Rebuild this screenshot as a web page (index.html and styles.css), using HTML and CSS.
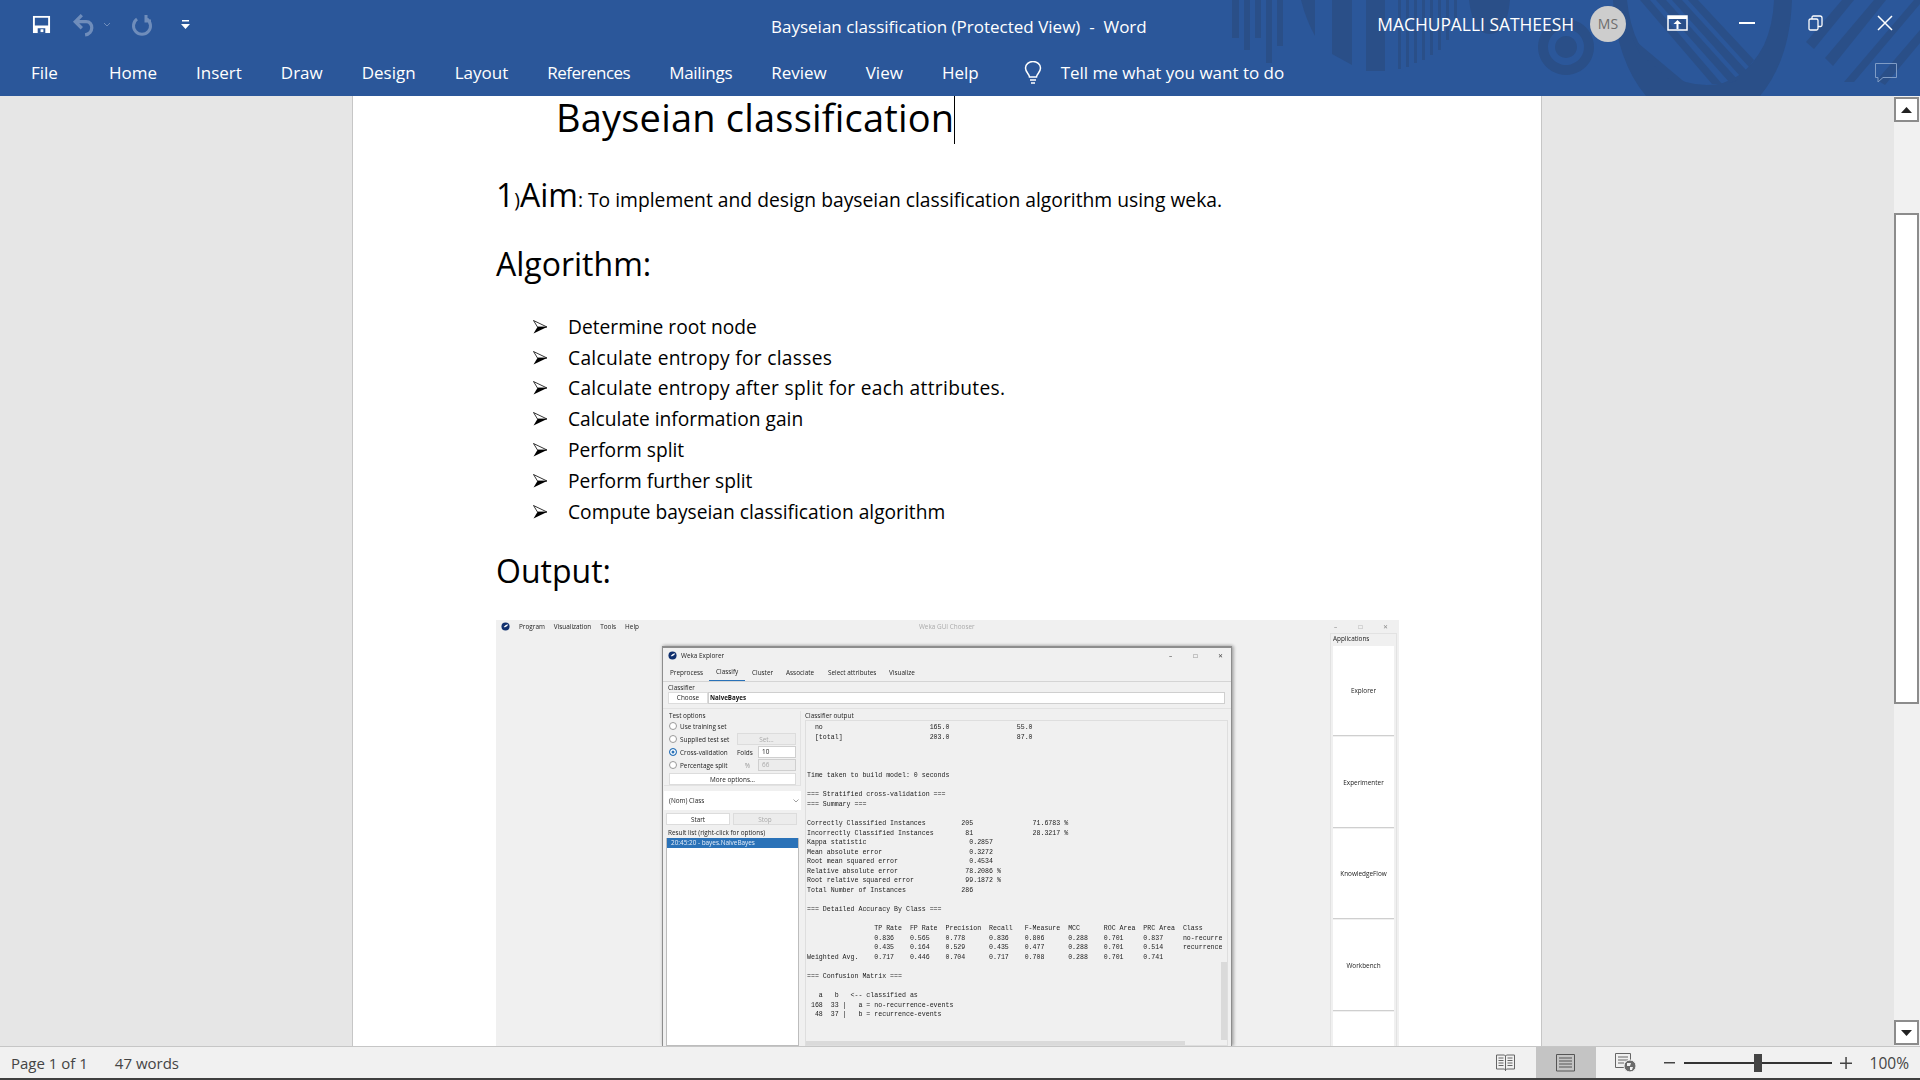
FILE: index.html
```html
<!DOCTYPE html>
<html lang="en">
<head>
<meta charset="utf-8">
<title>Bayseian classification (Protected View) - Word</title>
<link rel="stylesheet" href="styles.css">
</head>
<body>
<div class="app">
  <header class="ribbon">
    <svg class="ribbon-art" viewBox="0 0 1920 96" aria-hidden="true">
      <g fill="#2a4f88">
        <rect x="1232" y="0" width="7" height="38"/><rect x="1244" y="0" width="6" height="50"/><rect x="1255" y="0" width="6" height="38"/><rect x="1266" y="0" width="6" height="63"/><rect x="1277" y="0" width="6" height="46"/>
        <path d="M1301 0h14v36q-9-16-14-36z"/>
        <path d="M1332 0h20v65l-20-11z"/><rect x="1366" y="0" width="19" height="71"/>
        <rect x="1398" y="0" width="3" height="69"/><rect x="1406" y="0" width="3" height="67"/><rect x="1414" y="0" width="3" height="63"/><rect x="1422" y="0" width="3" height="60"/><rect x="1430" y="0" width="3" height="55"/><rect x="1438" y="0" width="3" height="50"/><rect x="1446" y="0" width="3" height="40"/><rect x="1454" y="0" width="3" height="30"/>
        <path d="M1469 0h41q-3 34-20 34t-21-34z"/>
        <path fill-rule="evenodd" d="M1566 19a28 28 0 1 0 .01 0zM1566 29a18 18 0 1 1-.01 0zM1566 36a11 11 0 1 0 .01 0z"/>
        <path fill-rule="evenodd" d="M1613 0h14q5 50 36 72 22 13 44 13 36 0 57-40 9-20 10-45h18q-2 60-32 96h-114q-30-36-33-96z"/>
        <path d="M1640 0h10l72 84h-10zM1656 0h10l72 80-8 3zM1672 0h10l64 70-6 6zM1688 0h10l56 60-5 7zM1632 38l56 47h-12l-36-31z"/>
        <path d="M1806 42l36-42h12l-40 49zM1825 58l49-58h12l-53 66zM1844 82l70-82h6v4l-66 78zM1877 80l43-50v13l-35 42z"/>
      </g>
    </svg>
    <div class="titlebar">
      <div class="qat">
        <svg class="ico-save" viewBox="0 0 20 20"><path fill="#fff" d="M1 1h18v18H1z"/><path fill="#2b579a" d="M3 3h14v8H3zM6 14h8v5H6z"/><path fill="#fff" d="M9 15h3v3H9z"/></svg>
        <svg class="ico-undo" viewBox="0 0 22 22"><path fill="none" stroke="#6f8dbb" stroke-width="3" d="M9 2L3 8l6 6M3 8h10c7 0 7 11-1 12"/></svg>
        <svg class="ico-caret" viewBox="0 0 8 5"><path fill="none" stroke="#6f8dbb" d="M1 1l3 3 3-3"/></svg>
        <svg class="ico-redo" viewBox="0 0 22 22"><path fill="none" stroke="#6f8dbb" stroke-width="3" d="M6 5a8.500 8.500 0 1 0 10 0M15 1v6h5"/></svg>
        <svg class="ico-more" viewBox="0 0 9 10"><path fill="#fff" d="M1 0h7v1.500H1zM0 4h9L4.500 9z"/></svg>
      </div>
      <div class="doc-title">Bayseian classification (Protected View)&nbsp; -&nbsp; Word</div>
      <div class="user">MACHUPALLI SATHEESH</div>
      <div class="avatar">MS</div>
      <div class="win-btns">
        <div class="win-btn"><svg width="21" height="16" viewBox="0 0 21 16"><path fill="none" stroke="#fff" stroke-width="1.500" d="M1 1h19v14H1z"/><path fill="#fff" d="M1 1h19v3H1zM10.500 5l4 4h-3v5h-2V9h-3z"/></svg></div>
        <div class="win-btn"><svg width="16" height="2" viewBox="0 0 16 2"><path fill="#fff" d="M0 0h16v2H0z"/></svg></div>
        <div class="win-btn"><svg width="16" height="16" viewBox="0 0 16 16"><path fill="none" stroke="#fff" stroke-width="1.300" d="M1 5.500q0-1.500 1.500-1.500h6q1.500 0 1.500 1.500v8q0 1.500-1.500 1.500h-6Q1 15 1 13.500zM4 4V2.500Q4 1 5.500 1h6.500q2 0 2 2v7q0 1.500-1.500 1.500H10"/></svg></div>
        <div class="win-btn"><svg width="16" height="16" viewBox="0 0 16 16"><path fill="none" stroke="#fff" stroke-width="1.500" d="M1 1l14 14M15 1L1 15"/></svg></div>
      </div>
    </div>
    <nav class="tabs">
      <span class="tab tab-file">File</span>
      <span class="tab">Home</span>
      <span class="tab">Insert</span>
      <span class="tab">Draw</span>
      <span class="tab">Design</span>
      <span class="tab">Layout</span>
      <span class="tab tab-refs">References</span>
      <span class="tab tab-mail">Mailings</span>
      <span class="tab">Review</span>
      <span class="tab">View</span>
      <span class="tab">Help</span>
      <svg class="ico-bulb" viewBox="0 0 20 24"><path fill="none" stroke="#fff" stroke-width="1.500" d="M6.500 16c0-3-4-4.500-4-9a7.500 6.500 0 0 1 15 0c0 4.500-4 6-4 9zM7 19h6M8 22h4"/></svg>
      <span class="tab tell">Tell me what you want to do</span>
      <svg class="ico-comment" viewBox="0 0 22 20"><path fill="none" stroke="#7f9cc6" d="M.5.500h21v14H8l-5 4.500v-4.500H.5z"/></svg>
    </nav>
  </header>

  <main class="workspace">
    <div class="gutter"></div>
    <article class="page">
      <h1 class="doc-h1"><span>Bayseian classification</span><i class="caret"></i></h1>
      <p class="aim"><span class="big">1</span><span class="tiny">)</span><span class="big">Aim</span>: To implement and design bayseian classification algorithm using weka.</p>
      <h2 class="doc-h2 algo">Algorithm:</h2>
      <ul class="steps">
        <li><svg class="arrow" viewBox="0 0 15 14"><path fill="none" stroke="#000" stroke-width=".8" d="M.5.500L14 7 4.500 7z"/><path d="M.5 13.500L14 7H4.500z"/></svg>Determine root node</li>
        <li class="wide"><svg class="arrow" viewBox="0 0 15 14"><path fill="none" stroke="#000" stroke-width=".8" d="M.5.500L14 7 4.500 7z"/><path d="M.5 13.500L14 7H4.500z"/></svg>Calculate entropy for classes</li>
        <li class="wide"><svg class="arrow" viewBox="0 0 15 14"><path fill="none" stroke="#000" stroke-width=".8" d="M.5.500L14 7 4.500 7z"/><path d="M.5 13.500L14 7H4.500z"/></svg>Calculate entropy after split for each attributes.</li>
        <li><svg class="arrow" viewBox="0 0 15 14"><path fill="none" stroke="#000" stroke-width=".8" d="M.5.500L14 7 4.500 7z"/><path d="M.5 13.500L14 7H4.500z"/></svg>Calculate information gain</li>
        <li><svg class="arrow" viewBox="0 0 15 14"><path fill="none" stroke="#000" stroke-width=".8" d="M.5.500L14 7 4.500 7z"/><path d="M.5 13.500L14 7H4.500z"/></svg>Perform split</li>
        <li><svg class="arrow" viewBox="0 0 15 14"><path fill="none" stroke="#000" stroke-width=".8" d="M.5.500L14 7 4.500 7z"/><path d="M.5 13.500L14 7H4.500z"/></svg>Perform further split</li>
        <li><svg class="arrow" viewBox="0 0 15 14"><path fill="none" stroke="#000" stroke-width=".8" d="M.5.500L14 7 4.500 7z"/><path d="M.5 13.500L14 7H4.500z"/></svg>Compute bayseian classification algorithm</li>
      </ul>
      <h2 class="doc-h2 out">Output:</h2>

      <div class="shot">
        <div class="chooser-bar">
          <svg class="weka-logo" viewBox="0 0 10 10"><circle cx="5" cy="5" r="4.500" fill="#10306e"/><path fill="#fff" d="M3 5.500q2-3 5-3-1 4-5 3z"/></svg>
          <span class="m1">Program</span><span class="m2">Visualization</span><span class="m3">Tools</span><span class="m4">Help</span>
          <span class="chooser-title">Weka GUI Chooser</span>
          <span class="chooser-ctl"><b>&#8211;</b><b>&#9633;</b><b>&#10005;</b></span>
        </div>
        <div class="shot-body">
          <section class="explorer">
            <div class="ex-title">
              <svg class="weka-logo" viewBox="0 0 10 10"><circle cx="5" cy="5" r="4.500" fill="#10306e"/><path fill="#fff" d="M3 5.500q2-3 5-3-1 4-5 3z"/></svg>
              <span>Weka Explorer</span>
              <span class="ex-ctl"><b>&#8211;</b><b>&#9633;</b><b>&#10005;</b></span>
            </div>
            <div class="ex-tabs">
              <span class="t1">Preprocess</span><span class="t2 on">Classify</span><span class="t3">Cluster</span><span class="t4">Associate</span><span class="t5">Select attributes</span><span class="t6">Visualize</span>
            </div>
            <div class="classifier">
              <span class="lbl">Classifier</span>
              <div class="cl-row"><span class="btn choose">Choose</span><span class="cl-field">NaiveBayes</span></div>
            </div>
            <div class="ex-main">
              <div class="ex-left">
                <div class="opts">
                  <span class="lbl">Test options</span>
                  <div class="opt"><i class="radio"></i><span>Use training set</span></div>
                  <div class="opt"><i class="radio"></i><span>Supplied test set</span><span class="btn dis set">Set...</span></div>
                  <div class="opt"><i class="radio sel"></i><span>Cross-validation</span><span class="extra">Folds</span><span class="num">10</span></div>
                  <div class="opt"><i class="radio"></i><span>Percentage split</span><span class="extra pct">%</span><span class="num dis">66</span></div>
                  <span class="btn more">More options...</span>
                </div>
                <div class="nom"><span>(Nom) Class</span><svg width="6" height="4" viewBox="0 0 6 4"><path fill="none" stroke="#777" stroke-width=".7" d="M.5.500L3 3 5.500.500"/></svg></div>
                <div class="run"><span class="btn">Start</span><span class="btn dis">Stop</span></div>
                <span class="lbl res-lbl">Result list (right-click for options)</span>
                <div class="results"><div class="res-sel">20:45:20 - bayes.NaiveBayes</div></div>
              </div>
              <div class="ex-right">
                <span class="lbl">Classifier output</span>
                <div class="out-box">
<pre class="mono">  no                           165.0                 55.0
  [total]                      203.0                 87.0



Time taken to build model: 0 seconds

=== Stratified cross-validation ===
=== Summary ===

Correctly Classified Instances         205               71.6783 %
Incorrectly Classified Instances        81               28.3217 %
Kappa statistic                          0.2857
Mean absolute error                      0.3272
Root mean squared error                  0.4534
Relative absolute error                 78.2086 %
Root relative squared error             99.1872 %
Total Number of Instances              286     

=== Detailed Accuracy By Class ===

                 TP Rate  FP Rate  Precision  Recall   F-Measure  MCC      ROC Area  PRC Area  Class
                 0.836    0.565    0.778      0.836    0.806      0.288    0.701     0.837     no-recurrence-events
                 0.435    0.164    0.529      0.435    0.477      0.288    0.701     0.514     recurrence-events
Weighted Avg.    0.717    0.446    0.704      0.717    0.708      0.288    0.701     0.741     

=== Confusion Matrix ===

   a   b   &lt;-- classified as
 168  33 |   a = no-recurrence-events
  48  37 |   b = recurrence-events</pre>
                  <i class="vthumb"></i>
                  <i class="hthumb"></i>
                </div>
              </div>
            </div>
          </section>
          <aside class="apps">
            <span class="lbl">Applications</span>
            <div class="app-btns">
              <span>Explorer</span><span>Experimenter</span><span>KnowledgeFlow</span><span>Workbench</span><span></span>
            </div>
          </aside>
        </div>
      </div>
    </article>
    <div class="gutter"></div>
    <aside class="scrollbar">
      <div class="sb-btn"><svg width="11" height="6" viewBox="0 0 11 6"><path fill="#222" d="M5.500 0L11 6H0z"/></svg></div>
      <div class="sb-thumb"></div>
      <div class="sb-btn sb-down"><svg width="11" height="6" viewBox="0 0 11 6"><path fill="#222" d="M0 0h11L5.500 6z"/></svg></div>
    </aside>
  </main>

  <footer class="status">
    <span class="st-page">Page 1 of 1</span>
    <span class="st-words">47 words</span>
    <div class="st-right">
      <span class="view"><svg width="19" height="18" viewBox="0 0 19 18"><path fill="none" stroke="#666" d="M.5 1h8l1 1 1-1h8v14h-8l-1 1-1-1h-8zM9.500 2v15M2.500 4h5M2.500 6.500h5M2.500 9h5M2.500 11.500h5M11.500 4h5M11.500 6.500h5M11.500 9h5M11.500 11.500h5"/></svg></span>
      <span class="view view-on"><svg width="19" height="18" viewBox="0 0 19 18"><path fill="none" stroke="#555" d="M.5.500h18v16.500H.5zM3 4h13M3 7h13M3 10h13M3 13h13"/></svg></span>
      <span class="view"><svg width="21" height="19" viewBox="0 0 21 19"><path fill="none" stroke="#666" d="M.5.500h15v14H.5zM3 4h10M3 7h10M3 10h6"/><circle cx="15" cy="13" r="6" fill="#6b6b6b" stroke="#f1f1f1"/><path fill="#f1f1f1" d="M12 10h4l-1 3h-3zM15 14h3l-1 3h-2z"/></svg></span>
      <svg class="z-minus" width="11" height="2" viewBox="0 0 11 2"><path fill="#444" d="M0 0h11v1.500H0z"/></svg>
      <div class="slider"><i class="knob"></i></div>
      <svg class="z-plus" width="12" height="12" viewBox="0 0 12 12"><path fill="#444" d="M0 5.500h12V7H0zM5.300 0h1.500v12H5.300z"/></svg>
      <span class="zoom-val">100%</span>
    </div>
  </footer>
  <div class="task-edge"></div>
</div>
</body>
</html>
```

FILE: styles.css
```css
* { box-sizing: border-box; }
html, body { margin: 0; height: 100%; overflow: hidden; }
body { font-family: "Open Sans", "Noto Sans", sans-serif; background: #e6e6e6; }
.app { width: 1920px; height: 1080px; display: flex; flex-direction: column; }

/* ribbon */
.ribbon { position: relative; height: 96px; background: #2b579a; color: #fff; flex: none; overflow: hidden; }
.ribbon-art { position: absolute; left: 0; top: 0; width: 1920px; height: 96px; }
.titlebar { position: relative; height: 47px; display: flex; align-items: center; }
.qat { width: 771px; height: 47px; padding: 2px 0 0 32px; display: flex; align-items: center; }
.ico-save { width: 19px; height: 19px; }
.ico-undo { width: 24px; height: 24px; margin-left: 21px; }
.ico-caret { width: 8px; height: 5px; margin-left: 7px; }
.ico-redo { width: 22px; height: 22px; margin-left: 20px; }
.ico-more { width: 9px; height: 10px; margin-left: 28px; }
.doc-title { font-size: 17px; white-space: nowrap; margin-top: 5px; }
.user { margin-left: auto; font-size: 17.400px; white-space: nowrap; }
.avatar { margin-left: 16px; width: 36px; height: 36px; border-radius: 50%; background: #cdcdcd; color: #6d6d6d; font-size: 14px; display: flex; align-items: center; justify-content: center; }
.win-btns { margin: -1px 1px 0 17px; display: flex; }
.win-btn { width: 69px; height: 36px; display: flex; align-items: center; justify-content: center; }
.tabs { position: relative; height: 49px; padding: 2px 0 0 31px; display: flex; align-items: center; gap: 39px; }
.tab { font-size: 17px; white-space: nowrap; }
.tab-file { margin-right: 12px; }
.tab-refs { letter-spacing: -.5px; }
.tab-mail { letter-spacing: -.3px; }
.ico-bulb { width: 20px; height: 24px; margin-left: 5px; margin-right: -21px; }
.ico-comment { position: absolute; left: 1875px; top: 16px; width: 22px; height: 20px; }

/* workspace */
.workspace { flex: 1; min-height: 0; display: flex; background: #e6e6e6; }
.gutter { width: 352px; flex: none; }
.page { width: 1190px; flex: none; background: #fff; padding-left: 143px; border-left: 1px solid #c6c6c6; border-right: 1px solid #c6c6c6; font-family: "Open Sans", sans-serif; font-variant-ligatures: none; color: #000; }
.doc-h1 { margin: 0 0 0 60px; display: flex; height: 48px; font-weight: 400; font-size: 38px; letter-spacing: .2px; line-height: 43px; white-space: nowrap; }
.caret { width: 1px; height: 48px; background: #000; flex: none; }
.aim { margin: 28px 0 0; height: 46px; line-height: 46px; font-size: 19.300px; white-space: nowrap; }
.aim .big { font-size: 32px; }
.aim .tiny { font-size: 19.300px; }
.doc-h2 { margin: 0; font-weight: 400; font-size: 32px; line-height: 44px; height: 44px; }
.algo { margin-top: 24px; }
.steps { list-style: none; margin: 25.800px 0 0; padding: 0 0 0 72px; font-size: 19.200px; }
.steps li { position: relative; height: 30.850px; line-height: 30.850px; white-space: nowrap; }
.steps li.wide { letter-spacing: .3px; }
.arrow { position: absolute; left: -35px; top: 8px; width: 15px; height: 14px; }
.out { margin-top: 21.700px; }

/* embedded Weka picture */
.shot { margin-top: 26.500px; width: 903px; height: 426px; overflow: hidden; background: #f0f0f0; color: #222; font-family: "Open Sans", sans-serif; font-size: 6.400px; filter: blur(.25px); display: flex; flex-direction: column; }
.chooser-bar { height: 14px; display: flex; align-items: center; padding-left: 5px; white-space: nowrap; flex: none; }
.weka-logo { width: 9px; height: 9px; flex: none; }
.m1, .m2, .m3, .m4 { margin-left: 9px; }
.chooser-title { margin-left: 280px; color: #aaa; }
.chooser-ctl { margin-left: auto; margin-right: 1px; display: flex; color: #888; }
.chooser-ctl b, .ex-ctl b { font-weight: 400; width: 25px; text-align: center; }
.shot-body { flex: 1; display: flex; min-height: 0; padding-left: 166px; }
.explorer { width: 570px; margin-top: 12px; background: #f0f0f0; border: 1px solid #8d8d8d; border-top: 2px solid #8d8d8d; border-bottom: 0; box-shadow: 2px 0 3px rgba(0,0,0,.25), 0 -1px 3px rgba(0,0,0,.15); display: flex; flex-direction: column; overflow: hidden; }
.ex-title { height: 16px; display: flex; align-items: center; padding-left: 5px; gap: 4px; flex: none; }
.ex-ctl { margin-left: auto; margin-right: -2px; display: flex; color: #444; }
.ex-tabs { height: 18px; display: flex; align-items: center; position: relative; border-bottom: 1px solid #d4d4d4; flex: none; padding-left: 7px; white-space: nowrap; }
.ex-tabs span { height: 17px; display: flex; align-items: center; }
.t1 { width: 39px; }
.t2 { width: 36px; padding-left: 7px; border-bottom: 1px solid #2a72b8; }
.t3 { margin-left: 7px; width: 34px; }
.t4 { width: 42px; }
.t5 { width: 61px; }
.lbl { display: block; line-height: 9px; height: 9px; white-space: nowrap; }
.classifier { height: 27px; padding: 1px 6px 0 5px; border-bottom: 1px solid #e2e2e2; flex: none; }
.cl-row { display: flex; height: 12px; }
.btn { background: #fff; border: 1px solid #dcdcdc; display: flex; align-items: center; justify-content: center; white-space: nowrap; }
.btn.dis { background: #ececec; color: #aaa; }
.choose { width: 40px; }
.cl-field { flex: 1; background: #fff; border: 1px solid #cfcfcf; font-weight: 700; color: #111; padding-left: 1px; line-height: 10px; font-size: 6.200px; }
.ex-main { flex: 1; display: flex; min-height: 0; padding-top: 2px; }
.ex-left { width: 138px; flex: none; padding-left: 1px; display: flex; flex-direction: column; }
.opts { height: 75.500px; padding: 0 4px 0 5px; border-bottom: 1px solid #e2e2e2; display: flex; flex-direction: column; flex: none; border-right: 1px solid #e2e2e2; }
.opt { height: 13px; display: flex; align-items: center; white-space: nowrap; }
.radio { width: 8px; height: 8px; border-radius: 50%; background: #fff; border: 1px solid #999; margin-right: 3px; flex: none; }
.radio.sel { background: #2a72b8; box-shadow: inset 0 0 0 1.500px #fff; border-color: #2a72b8; }
.set { margin-left: auto; width: 59px; height: 12px; }
.extra { margin-left: auto; width: 21px; }
.pct { color: #999; text-align: center; width: 21px; }
.num { width: 38px; height: 12px; background: #fff; border: 1px solid #cfcfcf; padding-left: 3px; line-height: 10px; flex: none; }
.num.dis { background: #ececec; color: #aaa; }
.more { height: 12px; margin-top: 2px; }
.nom { margin-top: 5px; height: 19px; background: #fff; display: flex; align-items: center; justify-content: space-between; padding: 0 2px 0 5px; flex: none; }
.run { display: flex; gap: 3px; height: 12px; margin-top: 3px; padding-left: 2px; padding-right: 3px; flex: none; }
.run .btn { width: 64px; }
.res-lbl { margin: 3px 0 1px 4px; }
.results { flex: 1; margin: 0 2px 0 2px; background: #fff; border: 1px solid #bdbdbd; border-top: 0; }
.res-sel { height: 10px; line-height: 10px; background: #2a72b8; color: #e6eefa; padding-left: 4px; }
.ex-right { flex: 1; min-width: 0; padding: 0 3px 0 4px; display: flex; flex-direction: column; }
.out-box { position: relative; flex: 1; overflow: hidden; border: 1px solid #dedede; background: #f0f0f0; min-height: 0; }
.mono { margin: 0; padding: 2.500px 0 0 1px; font-family: "Liberation Mono", "Courier New", monospace; font-size: 6.600px; line-height: 9.570px; color: #222; height: 100%; width: 416px; overflow: hidden; }
.vthumb { position: absolute; right: 0; top: 241.500px; width: 6px; height: 78px; background: #dadada; }
.hthumb { position: absolute; left: 0; top: 320.500px; width: 379px; height: 6px; background: #dadada; }
.apps { width: 67px; margin-left: 98px; margin-top: -1px; border: 1px solid #e2e2e2; border-bottom: 0; padding: 0 2px; overflow: hidden; }
.apps .lbl { margin: 0 0 3px; }
.app-btns { display: flex; flex-direction: column; gap: 1px; }
.app-btns span { height: 90.500px; flex: none; background: #fff; color: #222; display: flex; align-items: center; justify-content: center; border-bottom: 1px solid #cfcfcf; }

/* scrollbar */
.scrollbar { width: 26px; flex: none; background: #f1f1f1; padding: 1px 1px 1px 0; display: flex; flex-direction: column; }
.sb-btn { height: 25px; background: #fff; border: 2px solid #8c8c8c; display: flex; align-items: center; justify-content: center; flex: none; }
.sb-thumb { margin-top: 91px; height: 491px; background: #fff; border: 2px solid #8c8c8c; flex: none; }
.sb-down { margin-top: auto; }

/* status bar */
.status { height: 32px; flex: none; background: #f1f1f1; border-top: 1px solid #c6c6c6; display: flex; align-items: center; color: #444; font-size: 15px; white-space: nowrap; }
.st-page { margin-left: 11px; }
.st-words { margin-left: 27px; }
.st-right { margin-left: auto; display: flex; align-items: center; height: 100%; }
.view { width: 60px; height: 100%; display: flex; align-items: center; justify-content: center; }
.view-on { background: #c4c4c4; }
.z-minus { margin-left: 8px; }
.slider { position: relative; width: 148px; height: 2px; background: #333; margin-left: 9px; }
.knob { position: absolute; left: 70px; top: -8px; width: 8px; height: 18px; background: #444; }
.z-plus { margin-left: 8px; }
.zoom-val { margin-left: 18px; margin-right: 11px; font-size: 15.500px; }
.task-edge { height: 2px; background: #404040; flex: none; }
```
